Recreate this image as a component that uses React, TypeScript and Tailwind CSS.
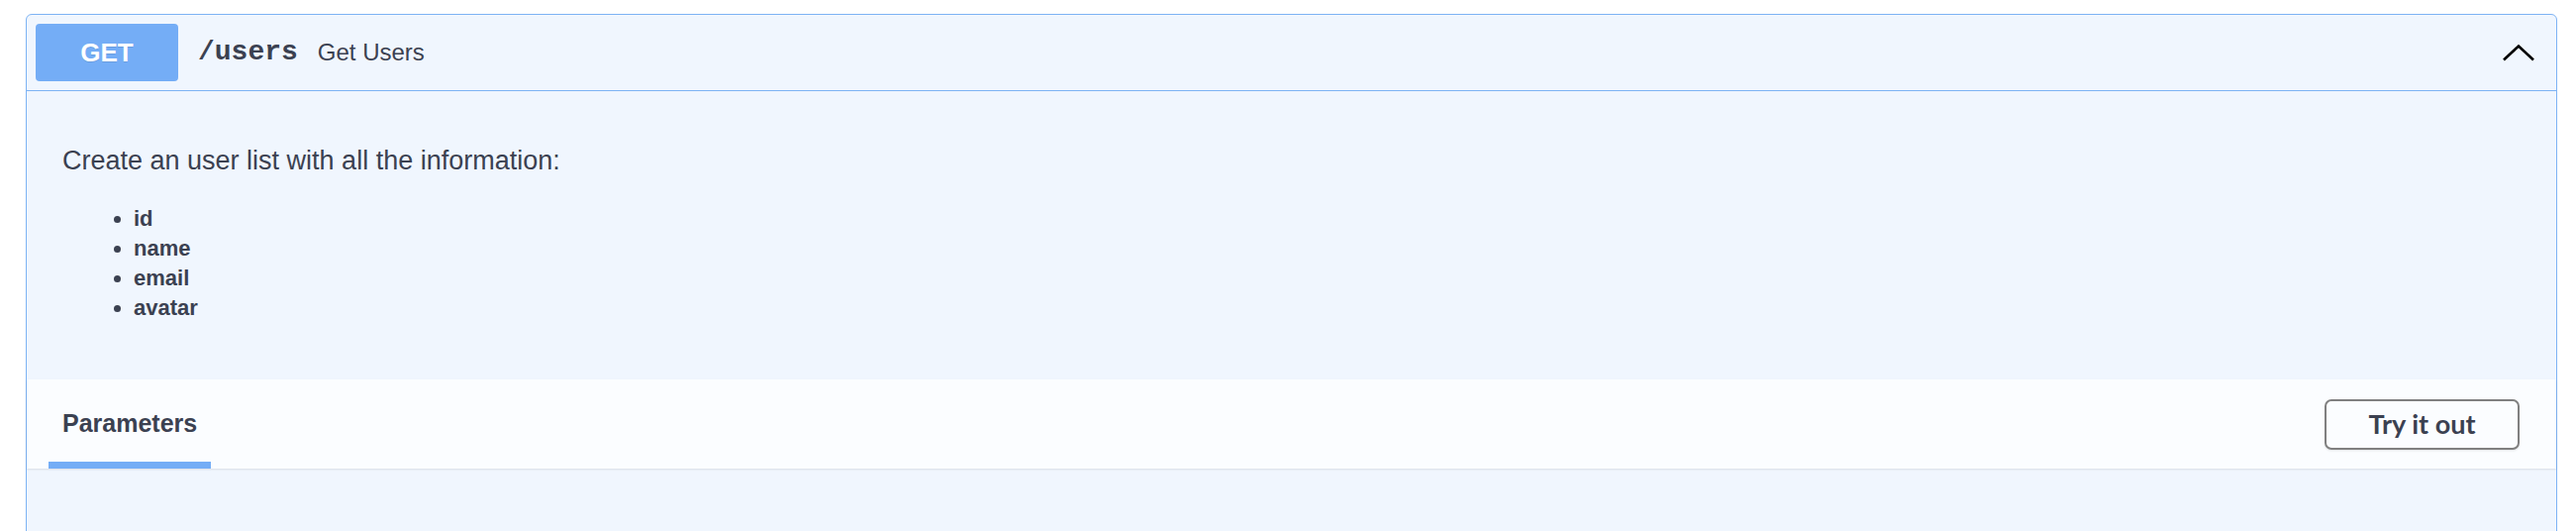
export default function App() {
  const fields = ["id", "name", "email", "avatar"];

  return (
    <div className="h-[536px] overflow-hidden bg-white pt-[14px] pl-[26px] pr-[19px] text-[#3b4151] font-['Liberation_Sans',Arial,sans-serif]">
      <div className="rounded-[6px] border border-[#7db3f4] bg-[#f0f6fe] min-h-[600px]">
        {/* Summary bar */}
        <div className="flex h-[77px] items-center border-b border-[#7db3f4] pl-[9px] pr-[22px]">
          <span className="flex h-[58px] w-[144px] items-center justify-center rounded-[4px] bg-[#74adf6] text-[26px] font-bold text-white [text-shadow:0_1px_0_rgba(0,0,0,0.1)]">
            GET
          </span>
          <span className="px-[20px] font-['Liberation_Mono',monospace] text-[28px] font-bold">
            /users
          </span>
          <span className="text-[24px]">Get Users</span>
          <div className="flex-1" />
          <svg width="32" height="17" viewBox="0 0 32 17" fill="none">
            <polyline points="1,15.5 16,1.5 31,15.5" stroke="#000" strokeWidth="2.6" />
          </svg>
        </div>

        {/* Description */}
        <div className="pl-[36px] pr-[36px] pt-[52px] pb-[57px]">
          <p className="text-[27px] leading-[36px]">Create an user list with all the information:</p>
          <ul className="mt-[26px] list-disc pl-[72px] text-[22px] font-bold leading-[30px]">
            {fields.map((f) => (
              <li key={f} className="h-[30px]">{f}</li>
            ))}
          </ul>
        </div>

        {/* Parameters header */}
        <div className="flex h-[90px] items-stretch justify-between bg-[#fbfdff] pl-[22px] pr-[37px] shadow-[0_1px_2px_rgba(0,0,0,0.1)]">
          <div className="flex items-center border-b-[7px] border-[#74adf6] px-[14px] pt-[6px] text-[25px] font-bold">
            Parameters
          </div>
          <div className="flex items-center">
            <button className="h-[51px] w-[197px] rounded-[7px] border-2 border-[#808080] bg-transparent font-['Lato',sans-serif] text-[27px] font-bold text-[#3b4151] shadow-[0_1px_2px_rgba(0,0,0,0.1)]">
              Try it out
            </button>
          </div>
        </div>
      </div>
    </div>
  );
}
